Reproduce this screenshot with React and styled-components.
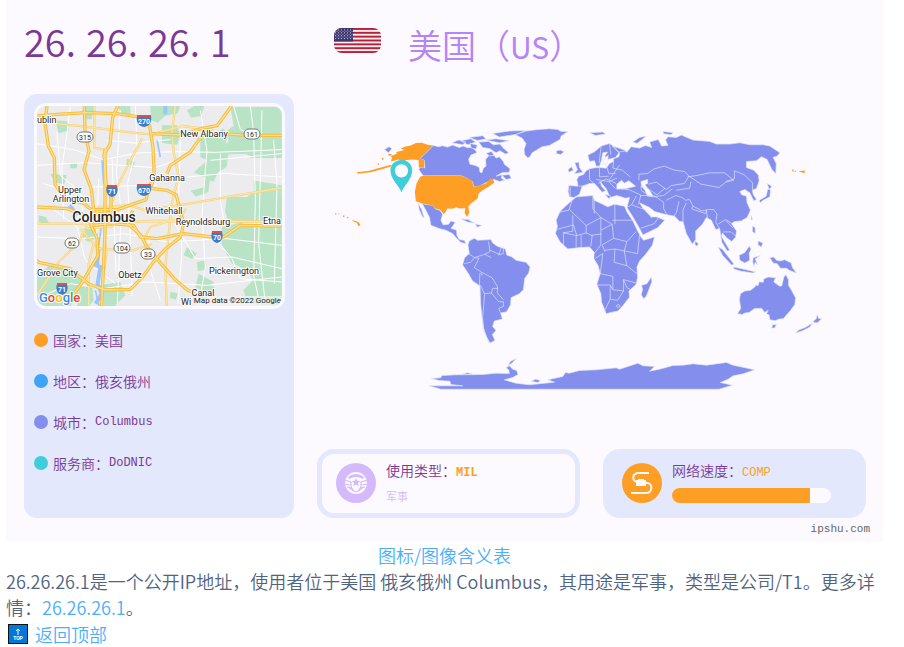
import React from "react";
import styled, { createGlobalStyle } from "styled-components";

const GlobalStyle = createGlobalStyle`
  * { box-sizing: border-box; }
  body { margin: 0; background: #fff; }
`;

const Page = styled.main`
  padding: 0 21px 0 6px;
  font-family: "Noto Sans CJK SC", sans-serif;
  font-weight: 350;
  font-size: 18px;
  line-height: 26px;
  color: #51647f;
`;

const Card = styled.section`
  padding: 0 17px 5px 18px;
  background: #fdfaff;
  color: #7b3896;
`;

const Columns = styled.div`
  display: grid;
  grid-template-columns: 270px minmax(0, 1fr);
  column-gap: 23px;
`;

const Header = styled(Columns)`
  height: 94px;
  align-items: start;
`;

const Address = styled.h1`
  display: flex;
  gap: 10px;
  margin: 0;
  padding-top: 16px;
  font-size: 38px;
  font-weight: 350;
  line-height: 50px;
`;

const Country = styled.div`
  display: flex;
  align-items: flex-start;
  gap: 27px;
  padding: 28px 0 0 17px;
`;

const FlagSvg = styled.svg`
  width: 47px;
  height: 25px;
  border-radius: 8px;
`;

const CountryName = styled.h2`
  margin: 0;
  margin-top: -8px;
  font-size: 34px;
  font-weight: 350;
  line-height: 50px;
  color: #b684f5;
`;

const CountryCode = styled.span`
  font-size: 30px;
  font-weight: 400;
`;

const Panel = styled.aside`
  padding: 9px 9px 44px 10px;
  border-radius: 13px;
  background: #e3e8fc;
`;

const CityFrame = styled.div`
  border: 3px solid #fdfaff;
  border-radius: 12px;
  overflow: hidden;
  line-height: 0;
`;

const CitySvg = styled.svg`
  display: block;
  width: 100%;
  border-radius: 8px;
`;

const Facts = styled.dl`
  display: grid;
  gap: 21px;
  margin: 21px 0 0;
  font-size: 14px;
  line-height: 20px;
`;

const Fact = styled.div`
  display: flex;
  align-items: center;

  &::before {
    content: "";
    width: 14px;
    height: 14px;
    margin-right: 5px;
    border-radius: 50%;
    background: ${(p) => p.$color};
  }
`;

const Term = styled.dt`
  margin: 0;
`;

const Value = styled.dd`
  margin: 0;
  font-family: ${(p) => (p.$latin ? '"Liberation Mono", monospace' : "inherit")};
  font-size: ${(p) => (p.$latin ? 12 : 14)}px;
`;

const Main = styled.div`
  display: flex;
  flex-direction: column;
  justify-content: space-between;
`;

const WorldSvg = styled.svg`
  display: block;
  width: 100%;
`;

const Boxes = styled.div`
  display: grid;
  grid-template-columns: 1fr 1fr;
  gap: 23px;
`;

const Box = styled.section`
  display: flex;
  align-items: center;
  gap: 10px;
  height: 69px;
  padding: 0 30px 0 14px;
  border: 5px solid #e3e8fc;
  border-radius: 17px;
  background: ${(p) => (p.$filled ? "#e3e8fc" : "transparent")};
`;

const BoxIcon = styled.svg`
  flex: none;
  width: 40px;
  height: 40px;
`;

const BoxBody = styled.div`
  flex: 1;
  padding-bottom: 3px;
`;

const BoxTitle = styled.div`
  font-size: 14px;
  line-height: 20px;
  margin-bottom: 5px;
`;

const Code = styled.span`
  font-family: "Liberation Mono", monospace;
  font-size: 12px;
  font-weight: ${(p) => (p.$strong ? 700 : 400)};
  color: #ff9e24;
`;

const Note = styled.div`
  font-size: 11px;
  line-height: 16px;
  color: #d4bcf8;
`;

const Track = styled.div`
  height: 15px;
  border-radius: 8px;
  overflow: hidden;
  background: #fdfaff;
`;

const Fill = styled.div`
  width: 87%;
  height: 100%;
  background: #ff9e24;
`;

const Site = styled.div`
  padding-top: 4px;
  margin-right: -4px;
  text-align: right;
  font-family: "Liberation Mono", monospace;
  font-size: 11px;
  line-height: 15px;
  color: #666;
`;

const Link = styled.a`
  color: #4caffc;
  text-decoration: none;
`;

const Caption = styled.div`
  text-align: center;
`;

const Summary = styled.p`
  margin: 0;
`;

const BackToTop = styled.div`
  display: flex;
  align-items: center;
  gap: 7px;
  padding: 1px 0 0 2px;
`;

const TopSvg = styled.svg`
  width: 20px;
  height: 20px;
`;

function Flag() {
  return (
    <FlagSvg viewBox="0 0 47 26" preserveAspectRatio="none" role="img" aria-label="US">
      <rect width="47" height="26" fill="#f6eef0" />
      {[0, 4, 8, 12, 16, 20, 24].map((y) => (
        <rect key={y} y={y} width="47" height="2" fill="#b8203a" />
      ))}
      <rect width="19" height="14" fill="#3c3670" />
      {[2, 5, 8, 11].map((y) => (
        <path key={y} d={`M1 ${y}H19`} stroke="#c9c7dc" strokeWidth="1" strokeDasharray="1 2" />
      ))}
      {[3.5, 6.5, 9.5].map((y) => (
        <path key={y} d={`M2.5 ${y}H19`} stroke="#a9a6c8" strokeWidth="1" strokeDasharray="1 2" />
      ))}
    </FlagSvg>
  );
}

const PARKS = [
  "M195 47h25l-5 40h-22z",
  "M290 47h40v25l-25-3z",
  "M390 47h90l-8 22-38 8-22 20-20-8z",
  "M425 105h45l10 30-10 28-45-5z",
  "M500 60l22-13h30l-10 30-30 5z",
  "M630 50h154v150l-60-20-30 10-70 2-5 38-25 15-15 30-10-5-5 35-38 14-15-18 40-10 2-30-33-15 35-30 30-45 40-15-5-35 20-15z",
  "M540 145l70-30 15 20-20 50-35 30-30-15z",
  "M680 185h104v18h-90z",
  "M645 115l60-5 79 40v50l-100-5-50-30z",
  "M620 320h60l20-15 20 30 20-20 44 5v75l-160-2-10-30z",
  "M700 270l84 15v100h-80z",
  "M605 410l60-15 20 30 25-8 35 22 39-20v225h-70l-35-15-10-30 30-30-20-30-45-20-30-55z",
  "M640 410h144v30l-60 30-60-20z",
  "M530 515l28-5-2 28-24 4z",
  "M535 550l45 25-20 35-35-20z",
  "M50 555l40-30 55 15 45 20-10 40-30 48H50z",
  "M180 590l35-10 5 50-15 18h-35z",
  "M240 585l60-10 15 40-35 35h-40z",
  "M190 415l38-10 5 35-30 15-18-15z",
  "M500 470l30 20-15 15-25-10z",
  "M90 250l50 5-8 25-28-3z",
  "M150 218h20v16h-20z",
  "M105 90l35 3 5 28-30 8z",
  "M55 375l22 5 12 25-34-10z",
  "M320 205l25 10-8 18-20-8z",
  "M395 475l12 12-15 10z",
  "M450 605l22 3-5 20-18-5z",
  "M560 580l22 10-8 30-30-5z",
];
const MINOR_ROADS = [
  "M50 160l110 18 90 30 100-20 115-4 120 2 199-8",
  "M110 125l10 130 60 50 10 80",
  "M50 225l145-8 210 15 60-20",
  "M150 47l-15 120-10 60 5 160",
  "M345 47l5 120-28 110 8 170 5 170",
  "M300 60l-12 190 15 110-12 280",
  "M480 150l-5 170 10 160-12 160",
  "M540 60l20 120-15 190 10 160-20 118",
  "M690 47l10 80 5 200-5 230 20 90",
  "M725 60l-10 400 20 180",
  "M760 150l10 130-8 300",
  "M50 440l130 5 130-15 130 25 180-10 164 20",
  "M60 620l90-40 100 15 130-20 180 10 224-25",
  "M90 350l80 60 25 100 90 70",
  "M620 250l164 10M500 260l130-12M570 210l214-20",
  "M590 450l45 55 25 60 124 10",
  "M260 150l80 8 110-10M210 290l200-6M70 280l100 30",
  "M235 265l-8 200M275 200l12 350M385 430l5 110 30 90",
  "M455 385l70 120 110-5 149 35",
  "M640 47l20 70 20 10M600 190l0 140 12 70",
];
const MAIN_ROADS = [
  "M222 47V172L250 178",
  "M395 132l90-25 95 12",
  "M110 100l110 12 90 12 80 8",
  "M365 145l-45 85-30 60-20 65-25 30",
  "M50 400h180l160-8 392 2",
  "M230 350l100-5 45 15 100-15 305-52",
  "M465 47l-10 80 5 60 15 70-20 80-20 190 4 120-55 64",
  "M50 615l65-100 62-60 15-40",
  "M180 415l55 60 100 6 60-20",
  "M370 450l20-40 92-30 15-25",
  "M250 400l8 90-12 90 2 70",
  "M205 650V520l15-60",
  "M182 385l20 30 75-8",
];
const HIGHWAYS = [
  "M50 77l60-5 90-5 90 3 80 12 18 25 10 65 4 90-12 32 50 6 28 14 10 40 12 45-10 42-45 35-35 38-35 48-35 35-75 2-50-18-55-45-95-20-52-46 8-65-2-100-14-50",
  "M292 47l-15 35-8 80-18 30 6 85 15 45v45l-50 5-10 35 18 35 2 55-50 85-50 66",
  "M192 47l2 75 12 60-15 55 22 60 8 70",
  "M80 47l-6 50 10 70 18 35 2 80 28 40 60 18 20 18h80l50-18 35-12 12-45 10-15",
  "M50 350l90 5 60 22 15 28 60-5 65 5 20 35 50 5 80-15 85 10h35l50-35 124 2",
  "M337 360l-15 40 40 35 15 30 45 55 40 45 40 35 60 25",
  "M395 130l90 4 60-20 45-8 30-40 14-20",
  "M440 250l10-25 60-40 35-50 60-5 80 5h100",
  "M254 175v250l-10 220",
];

const SHIELDS = [
  [48, 25, "315"],
  [215, 22, "161"],
  [35, 131, "62"],
  [85, 136, "104"],
  [111, 142, "33"],
];
const INTERSTATES = [
  [107, 15, "270"],
  [75, 85, "71"],
  [107, 84, "670"],
  [180, 131, "70"],
  [25, 183, "71"],
];
const PLACES = [
  [0, 17, "ublin", "start"],
  [167, 31, "New Albany", "middle"],
  [130, 75, "Gahanna", "middle"],
  [33, 87, "Upper", "middle"],
  [34, 96, "Arlington", "middle"],
  [127, 108, "Whitehall", "middle"],
  [166, 119, "Reynoldsburg", "middle"],
  [244, 118, "Etna", "end"],
  [0, 170, "Grove City", "start"],
  [93, 172, "Obetz", "middle"],
  [197, 168, "Pickerington", "middle"],
  [166, 190, "Canal", "middle"],
];

function CityMap() {
  return (
    <CitySvg viewBox="0 0 245 200" fontFamily="Roboto, sans-serif" fontWeight="400" role="img" aria-label="Columbus">
      <rect width="245" height="200" fill="#ececef" />
      <g transform="scale(.33333) translate(-50 -47)" fill="none" strokeLinejoin="round">
        {PARKS.map((d) => <path key={d} d={d} fill="#b9e3c5" />)}
        <g stroke="#fff" strokeWidth="3">{MINOR_ROADS.map((d) => <path key={d} d={d} />)}</g>
        <path d="M215 520l25 10-8 50 12 30-18 30M435 47v25M148 345l15 20 25 8M235 470l-5 60" stroke="#9cc5fa" strokeWidth="12" />
        <path d="M225 600l12 50M243 410l-10 70M245 210l5 70M410 150l10 50" stroke="#9cc5fa" strokeWidth="5" />
        <g stroke="#f5cf78" strokeWidth="7">{MAIN_ROADS.map((d) => <path key={d} d={d} />)}</g>
        <g stroke="#fde5a0" strokeWidth="4">{MAIN_ROADS.map((d) => <path key={d} d={d} />)}</g>
        <g stroke="#f6bd3f" strokeWidth="10">{HIGHWAYS.map((d) => <path key={d} d={d} />)}</g>
        <g stroke="#ffe08a" strokeWidth="4">{HIGHWAYS.map((d) => <path key={d} d={d} />)}</g>
      </g>
      {SHIELDS.map(([x, y, n]) => (
        <g key={n} transform={`translate(${x} ${y + 6})`}>
          <rect x={n.length > 2 ? -8 : -7} y="-5" width={n.length > 2 ? 16 : 14} height="10" rx="5" fill="#fff" stroke="#777" />
          <text y="3" textAnchor="middle" fontSize="7" fill="#222">{n}</text>
        </g>
      ))}
      {INTERSTATES.map(([x, y, n]) => (
        <g key={x + n} transform={`translate(${x} ${y})`}>
          <path d={n.length > 2 ? "M-7-5H7C8 1 6 5 0 6C-6 5-8 1-7-5Z" : "M-5-5H5C7 1 4 5 0 6C-4 5-7 1-5-5Z"} fill="#3d7cc9" />
          <path d={n.length > 2 ? "M-7-5H7" : "M-5-5H5"} stroke="#d45550" strokeWidth="2" />
          <text y="3" textAnchor="middle" fontSize="7" fontWeight="700" fill="#fff">{n}</text>
        </g>
      ))}
      <g fill="#222" stroke="#fff" strokeWidth="2" strokeLinejoin="round" paintOrder="stroke">
        {PLACES.map(([x, y, name, anchor]) => (
          <text key={name} x={x} y={y} textAnchor={anchor} fontSize="9">{name}</text>
        ))}
        <text x="67" y="116" textAnchor="middle" fontSize="14" fontWeight="500">Columbus</text>
        <text x="144" y="199" fontSize="9">Wi</text>
      </g>
      <rect x="157" y="190" width="88" height="10" fill="#f3f3f3" opacity=".7" />
      <text x="244" y="197" textAnchor="end" fontSize="8" fill="#222">Map data ©2022 Google</text>
      <text x="2" y="196" fontSize="13" fontWeight="500" stroke="#fff" strokeWidth="2" paintOrder="stroke">
        <tspan fill="#4285f4">G</tspan><tspan fill="#ea4335">o</tspan><tspan fill="#fbbc05">o</tspan><tspan fill="#4285f4">g</tspan><tspan fill="#34a853">l</tspan><tspan fill="#ea4335">e</tspan>
      </text>
    </CitySvg>
  );
}

function WorldMap() {
  return (
    <WorldSvg viewBox="318 94 548 354" role="img" aria-label="美国">
      <g transform="translate(320 120) scale(.33333)" fill="#848eed" stroke="#e0e7fb" strokeWidth="2" strokeLinejoin="round">
        {/* North America */}
        <path d="M342 76L358 80 370 77 385 81 400 75 420 82 432 78 445 83 458 82 470 92 472 98 455 105 448 118 452 132 468 136 480 142 482 156 488 158 492 144 500 138 499 118 510 105 525 106 530 114 540 110 552 124 555 132 572 146 570 156 548 158 530 168 548 164 546 174 556 180 540 184 525 178 515 180 500 188 480 198 463 200 460 185 438 172 425 167 312 167 299 148 302 142 317 143 315 120 302 116Z" />
        <path d="M398 68l20-8 22 6-10 8zM425 62l30-6 14 10-24 8zM452 70l22 5-4 12-14-3zM478 66l30-2 14 10 20-2 10 12 16 14-10 4-16-10-12 6-18-12-22-4zM450 52l40-5 10 10-26 4zM500 60l30-4 40 6-30 6zM520 40l50-7 50-2-30 12-50 8zM548 165l22-2 6 12-16 3zM500 100l16-6 8 10-12 4zM196 88l14-8 8 6-10 12z" />
        <path d="M588 44L605 38 620 33 650 29 690 26 715 28 725 34 745 34 725 48 722 58 708 66 690 76 668 80 652 90 638 98 632 110 625 113 616 104 614 88 620 70 608 54Z" />
        <path d="M309 251L340 255 348 266 362 270 370 282 365 300 372 314 388 312 395 302 408 306 400 318 395 324 412 330 413 346 420 358 435 360 440 370 425 367 410 352 400 340 380 330 360 325 335 315 331 292 320 270ZM297 249l10 18 8 26-5-3-10-22zM425 296l22 2 18 11-20-4zM468 311l20 5-14 5z" />
        {/* Greater part of Eurasia */}
        <g transform="translate(660 0)">
          <path d="M118 168L132 163 140 152 150 146 165 143 180 142 200 144 210 130 222 124 222 116 238 110 240 98 232 93 252 90 262 96 275 80 300 84 318 76 336 82 330 66 356 58 366 78 385 76 378 60 385 50 410 52 425 45 460 60 510 64 530 72 570 72 600 68 630 74 670 74 690 78 720 98 712 108 700 112 709 130 708 160 696 148 682 118 665 110 650 122 620 124 620 142 642 150 656 165 658 182 650 205 638 210 640 222 650 238 642 242 630 218 615 208 600 214 606 224 620 228 622 248 632 270 622 292 604 302 585 304 575 310 590 332 588 350 576 364 560 352 548 338 545 348 558 370 570 390 562 392 546 365 540 325 528 328 515 300 500 292 488 312 468 332 468 358 458 372 440 340 430 304 420 304 405 288 375 282 345 274 330 262 300 248 310 264 335 290 352 290 375 300 355 322 310 344 300 325 280 290 262 262 270 232 258 234 232 226 212 232 200 206 182 184 186 198 198 212 188 216 165 190 150 190 128 198 120 222 104 232 90 230 86 215 88 196 116 198 112 178Z" />
          <path d="M145 105L165 95 185 78 210 70 226 82 238 98 228 112 205 118 196 108 204 96 190 98 186 120 180 138 170 138 165 122 150 124ZM106 128l12-2 2 16 10 14-26 5 10-12zM86 148l10-8 6 10-14 6zM50 93l12-3 12 5-10 8-12-2zM218 78l20 6 22 8-24 4zM280 66l20-14 20-4-14 12-14 10zM684 206l8 4-2 20-20 10-9 8-2-8 20-12zM682 190l14 8-8 10zM466 362l10 8-3 8-7-4zM535 380l14 8 20 26 14 18-8 2-26-28zM634 286l4 10-4 4zM638 318l8 4 0 18-8-6zM655 362l14 6-4 12-10-6zM196 222l18 6-6 8zM150 38l40-2 8 6-30 4zM370 34l30 4-6 6-22-3z" />
          <path d="M232 192l14-12 8 9 14-7 20 16-28 7-28 2zM304 184l20-6 0 12-8 4 16 20 8 14-16 0-8-18-10-12zM188 132l10-20 8-6-2 24z" fill="#fdfaff" />
          {/* Africa */}
          <path d="M98 240L112 230 160 226 164 240 185 250 205 260 225 252 255 258 262 275 280 302 292 328 305 352 312 360 345 350 338 375 320 400 300 422 292 440 294 470 290 492 268 512 270 530 250 556 235 572 215 576 200 580 194 565 186 545 184 520 172 492 182 460 176 436 163 415 164 396 150 380 120 382 85 386 62 365 48 340 54 318 50 300 62 274 76 260Z" />
          <g fill="none">
            <path d="M98 240l-10 30-28 6M90 268l50 48 44-24-24-26 0-40M140 316l0 22-28 8-10-32-52 14M100 285l0 48-30 5M184 292l0 38 34-18-34-20M226 252l0 60M218 300h62M218 312l4 42-34 20 8 20M164 240l0 40M112 346l-40-8M72 338l0 38M110 346v36M125 345v38M140 338l18 8-4 32M184 330l0 44-22 28M156 345l30-4M222 354l40 10 28-30M262 364l-8 28 40 8 6-58M196 390l30-4 28 6M166 415l24-15-8 60M226 386l-2 40 38 10-8-44M262 436l30 24M182 460l38 8 0 40 32 4 0-34 38 10M172 494h40l8 14M212 496v40l22 4 18-28M196 570l16-34M252 478l10 24 12 6M230 556l8-4 4 6-8 4z" />
            <path d="M240 134l-16 24-14 20M150 148l0 30 24 22M180 142l0 28 28-2M170 178l38 6 24-10M222 124l-2 20 28 6 24 20M92 200l0 28M118 198h22M185 78l-6 50M210 72l4 32M208 185l20 20M235 205l35 4 34 16-8 28" />
            <path d="M298 180l0-18 26-2 20-14 30-8 30 12 30 4 14 14-14 22-38 6-16 12-30-22-24 6M448 168l36 24 54 10 20-16 24-6-28-22-44 0-38 8-28 4M558 184l26-8 0-24 30 12 24 24 0 22M376 204l-24 20-22-16-26-10 2 14 32 18 34-4 26-20M410 210l40-6 4-20M302 226l40 0 30 20 0 20 10 18M380 240l28-14 20 6 10 8 12-2 10 20 28 14 18-4 16 0 10 14-4 24 12 20M418 244l-8 34-8 10M440 248l-10 20 0 36M460 258l-4 8 42 14 2-10M500 270l4 28M534 312l24-14 16 10M550 335l24 0 16 14M560 302l20 22M262 262l14-8 14-26M276 254l50 18 10 22M304 324l40-14 14-20M198 130l10 30 20 0M176 190l24-14 30 14" />
          </g>
        </g>
        {/* South America */}
        <g transform="translate(300 360)">
          <path d="M150 2L165-6 175 0 215-2 220 8 234 18 258 26 262 44 278 50 290 60 320 66 332 80 328 98 316 114 312 148 300 160 275 172 274 192 262 214 244 218 249 236 225 242 220 258 230 270 219 282 227 300 212 308 202 290 192 262 188 230 184 190 182 137 160 122 145 96 130 74 136 52 150 40 146 14Z" />
          <path d="M148 40l18 12 30-10 16-8-4-30M135 70l18-4 14-14 12 2-14 28 20 12 4 12M182 98l-2 38 4 0 12 26-6 70 4 40 16 38M188 96l30 16 16 26 0 20 18 20M196 160l20-2 4-14 16 0M216 158l22 26 14 0 0 14-14 6 6 14M212 30l28 12 6-24M236 44l16-4 0-20M196 42l20 10" fill="none" />
          {/* Antarctica */}
          <path d="M36 414L64 412 68 405 110 403 190 402 230 398 270 399 268 388 260 382 270 376 280 386 292 390 296 402 280 411 255 418 290 428 330 433 405 425 385 418 430 408 438 396 450 398 480 390 530 388 590 382 600 386 625 378 655 368 670 376 705 378 690 392 720 386 760 375 790 374 820 370 860 374 920 366 940 374 1005 388 970 400 940 406 925 416 902 426 938 434 898 446 65 446 30 436 130 436 95 432 92 422 60 420ZM266 374l8-12 16-8-12 14zM335 422l14-6 14 4-8 6zM125 402h40l-20-5z" />
        </g>
        {/* Oceania and neighbouring islands */}
        <g transform="translate(930 360)">
          <path d="M65 110L67 124 50 168 42 175 35 163 39 148 36 135 52 130ZM332 160L345 152 362 150 375 140 378 134 385 136 388 124 400 126 402 116 415 110 437 112 432 125 450 138 456 136 462 110 468 103 476 118 476 135 485 150 497 172 495 192 482 210 460 235 448 236 436 241 420 238 418 224 410 220 415 210 404 216 396 204 375 204 358 216 345 218 338 222 323 220 333 204 329 178ZM428 253l12 0-6 10-8 0zM562 222l4 12 9 1-12 12-8 0-6-4 10-8zM548 248l-8 12-20 10-22 8 8-9 20-8zM312 80l24 5 42 10-10 3-36-6-20-6zM328 45L345 37 358 18 364 26 358 40 360 60 345 68 330 60ZM370 52l22-6-16 10 8 18-8-8-3 12-4-12zM420 52l12-2 8 10 12 2 12-4 20 10 4 14 12 16-22-8-8-6-18 0-10-14-12-2z" />
        </g>
        {/* United States */}
        <g fill="#ff9e24" stroke="none">
          <path d="M215 108L232 102 232 96 256 90 245 86 256 80 275 76 290 69 308 68 325 74 342 76 302 115 315 120 315 143 299 142 298 120 280 118 262 120 250 126 238 118 216 124 218 112ZM113 156L150 152 185 142 216 134 216 139 188 147 155 156 116 161ZM208 102l10 0-4 6-6-2zM188 114h5v5h-5zM176 130h4v4h-4z" />
          <path d="M312 167L425 167 440 172 458 180 463 200 480 196 500 190 512 176 520 175 525 187 510 198 500 204 490 210 478 220 475 235 455 250 447 260 450 278 443 290 436 278 438 264 420 265 412 261 400 266 385 265 374 282 362 268 345 264 340 255 308 250 290 243 287 215 292 190 303 170Z" />
          <path d="M48 279h4v4h-4zM58 279h3v3h-3zM72 286h4v4h-4zM84 290h4v4h-4zM100 299l10 3 10 5 4 8-6 3-4-10-12-5zM1417 148h4v6h-4zM1424 152h5v3h-5zM1436 153l18-2 2 7h-8z" />
        </g>
        <path d="M247 217C240 195 214 178 214 151C214 133 228 120 247 120S279 133 279 151C279 178 254 195 247 217ZM247 132a20 20 0 1 0 0 40a20 20 0 1 0 0-40Z" fill="#40cddb" fillRule="evenodd" stroke="none" />
      </g>
    </WorldSvg>
  );
}

function ArmyIcon() {
  return (
    <BoxIcon viewBox="0 0 40 40" aria-hidden="true">
      <circle cx="20" cy="20" r="20" fill="#d4b9fc" />
      <circle cx="20" cy="20" r="11" fill="#fdfaff" />
      <path d="M12 14Q20 8 28 14L27 16Q20 12 13 16Z" fill="#d4b9fc" />
      <path d="M8 17L15 19 15 24 17 27 13 25M32 17L25 19 25 24 23 27 27 25M9 21l5 1M31 21l-5 1M11 24l4 1M29 24l-4 1" fill="none" stroke="#d4b9fc" strokeWidth="1.2" />
      <path d="M20 15l1.2 2.8 3 .2-2.3 2 .8 3-2.7-1.6L17.300 23l.8-3-2.300-2 3-.2Z" fill="#d4b9fc" />
      <path d="M16 27l4 2 4-2" fill="none" stroke="#d4b9fc" strokeWidth="1" />
    </BoxIcon>
  );
}

function CableIcon() {
  return (
    <BoxIcon viewBox="0 0 40 40" aria-hidden="true">
      <circle cx="20" cy="20" r="20" fill="#ff9e24" />
      <path d="M27 10H17C9 10 10 19 16 19M22 20H25C31 20 31 30 24 30H9" fill="none" stroke="#fdfaff" strokeWidth="2" />
      <path d="M14 17h2v-1h6v1h2v6h-10z" fill="#fdfaff" />
    </BoxIcon>
  );
}

function TopIcon() {
  return (
    <TopSvg viewBox="0 0 20 20" aria-hidden="true">
      <rect width="20" height="20" fill="#111" />
      <rect x="1" y="1" width="18" height="18" fill="#0078d7" />
      <path d="M10 11V5M8 7l2-2 2 2" fill="none" stroke="#fff" />
      <text x="10" y="16" textAnchor="middle" fontFamily="Roboto, sans-serif" fontWeight="700" fontSize="5" fill="#fff">TOP</text>
    </TopSvg>
  );
}

const FACTS = [
  ["国家", "美国", "#ff9e24", false],
  ["地区", "俄亥俄州", "#3fa4f5", false],
  ["城市", "Columbus", "#848eed", true],
  ["服务商", "DoDNIC", "#40cddb", true],
];

export default function App() {
  return (
    <Page>
      <GlobalStyle />
      <Card>
        <Header as="header">
          <Address>
            <span>26.</span><span>26.</span><span>26.</span><span>1</span>
          </Address>
          <Country>
            <Flag />
            <CountryName>美国（<CountryCode>US</CountryCode>）</CountryName>
          </Country>
        </Header>
        <Columns>
          <Panel>
            <CityFrame><CityMap /></CityFrame>
            <Facts>
              {FACTS.map(([term, value, color, latin]) => (
                <Fact key={term} $color={color}>
                  <Term>{term}：</Term>
                  <Value $latin={latin}>{value}</Value>
                </Fact>
              ))}
            </Facts>
          </Panel>
          <Main>
            <WorldMap />
            <Boxes>
              <Box>
                <ArmyIcon />
                <BoxBody>
                  <BoxTitle>使用类型：<Code $strong>MIL</Code></BoxTitle>
                  <Note>军事</Note>
                </BoxBody>
              </Box>
              <Box $filled>
                <CableIcon />
                <BoxBody>
                  <BoxTitle>网络速度：<Code>COMP</Code></BoxTitle>
                  <Track role="progressbar" aria-label="网络速度" aria-valuenow={87}><Fill /></Track>
                </BoxBody>
              </Box>
            </Boxes>
          </Main>
        </Columns>
        <Site>ipshu.com</Site>
      </Card>
      <Caption><Link href="#legend">图标/图像含义表</Link></Caption>
      <Summary>
        26.26.26.1是一个公开IP地址，使用者位于美国 俄亥俄州 Columbus，其用途是军事，类型是公司/T1。更多详情：<Link href="#detail">26.26.26.1</Link>。
      </Summary>
      <BackToTop><TopIcon /><Link href="#top">返回顶部</Link></BackToTop>
    </Page>
  );
}
